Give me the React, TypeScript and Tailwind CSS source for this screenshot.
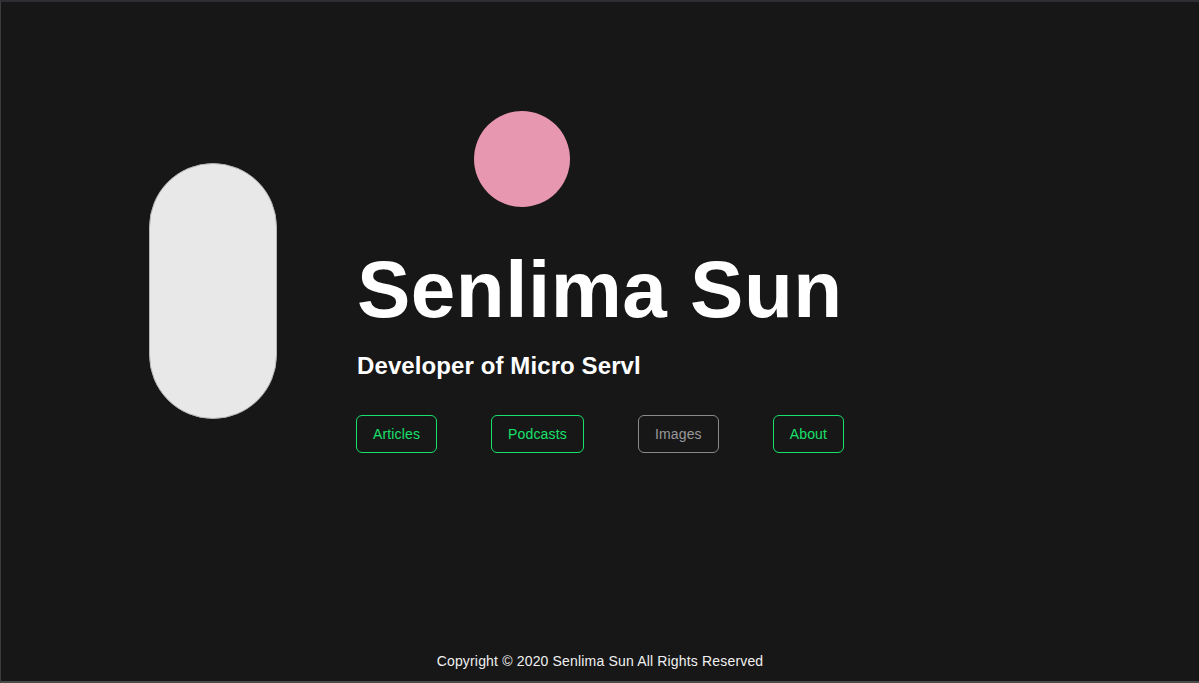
import React from 'react';

const links = [
  { label: 'Articles', active: true },
  { label: 'Podcasts', active: true },
  { label: 'Images', active: false },
  { label: 'About', active: true },
];

const App = () => {
  return (
    <div
      className="h-[683px] w-full flex flex-col bg-[#171717] border-t-2 border-t-[#2e2e33] border-l border-l-[#3c3c3c] border-b-2 border-b-[#4a4a4a] overflow-hidden"
      style={{ fontFamily: '"Liberation Sans", Arial, sans-serif' }}
    >
      {/* Hero */}
      <main className="flex-1 flex items-start pt-[109px] pl-[148px]">
        <div className="mt-[52px] w-[128px] h-[256px] rounded-full bg-[#e8e8e8] border border-[#b5b5b5]" />
        <div className="ml-[80px] flex flex-col">
          <div className="ml-[117px] w-[96px] h-[96px] rounded-full bg-[#e897b0]" />
          <h1 className="mt-[43px] text-[80px] leading-none font-bold tracking-[0.5px] text-white">Senlima Sun</h1>
          <h2 className="mt-[20px] text-2xl font-bold tracking-[0.1px] text-white">Developer of Micro Servl</h2>
          <nav className="mt-[33px] -ml-px flex gap-[54px]">
            {links.map((l) => (
              <a
                key={l.label}
                href="#"
                className={
                  l.active
                    ? 'px-4 py-2 text-sm tracking-[0.15px] rounded-md border border-[#19e06a] text-[#19e06a]'
                    : 'px-4 py-2 text-sm tracking-[0.15px] rounded-md border border-[#8a8a8a] text-[#9a9a9a]'
                }
              >
                {l.label}
              </a>
            ))}
          </nav>
        </div>
      </main>
      {/* Footer */}
      <footer className="pb-[10px] text-center text-sm tracking-[0.17px] text-[#f0f0f0]">
        Copyright © 2020 Senlima Sun All Rights Reserved
      </footer>
    </div>
  );
};

export default App;
